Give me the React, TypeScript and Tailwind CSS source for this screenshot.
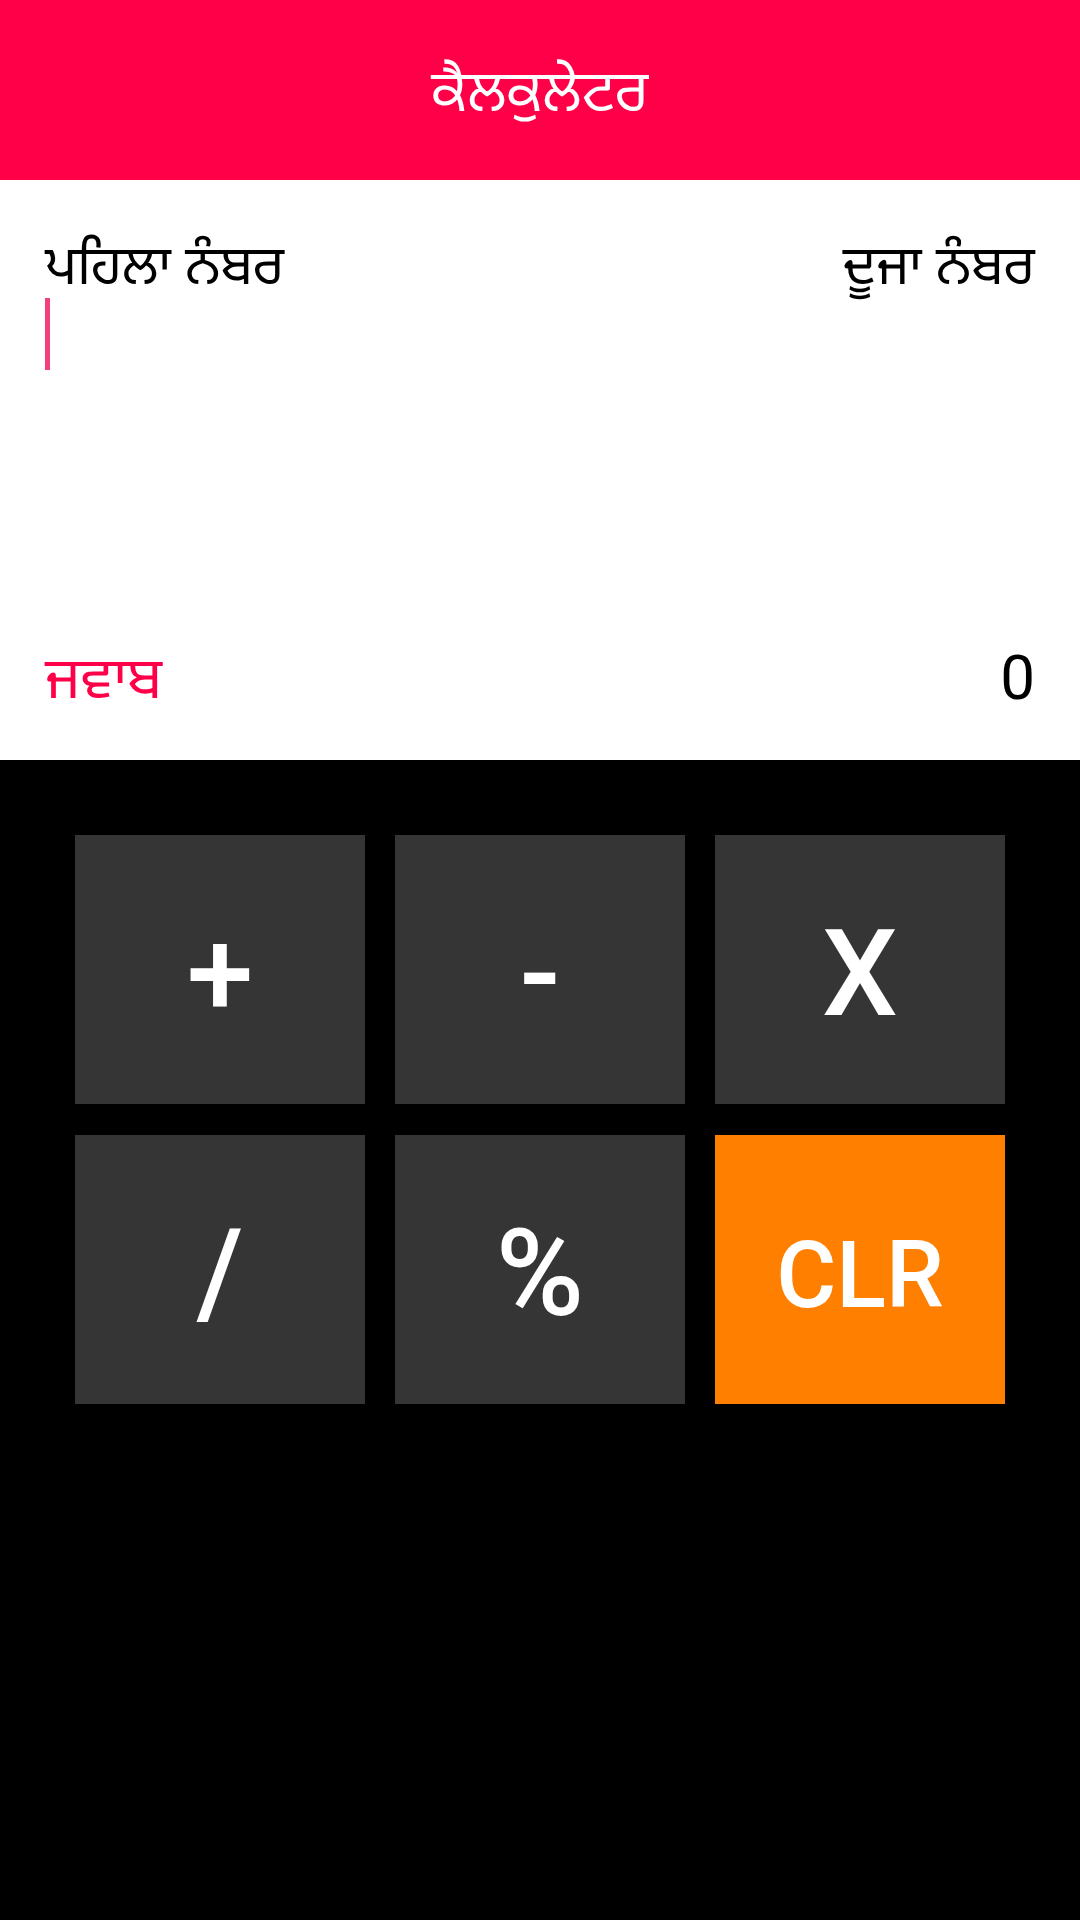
import React from 'react';

const guru = { fontFamily: '"Noto Sans Gurmukhi", "Noto Sans", "Lohit Gurmukhi", sans-serif' };
const roboto = { fontFamily: 'Roboto, "Noto Sans", sans-serif' };

const keys = [
  { label: '+', tone: 'dark' },
  { label: '-', tone: 'dark' },
  { label: 'X', tone: 'dark' },
  { label: '/', tone: 'dark' },
  { label: '%', tone: 'dark' },
  { label: 'CLR', tone: 'orange' },
];

const App = () => {
  return (
    <div className="w-[1080px] min-h-[1920px] flex flex-col bg-black">
      {/* Title bar */}
      <div className="h-[180px] bg-[#ff0048] flex items-center justify-center">
        <h1 className="text-[58px] text-white leading-none pt-[14px]" style={guru}>
          ਕੈਲਕੁਲੇਟਰ
        </h1>
      </div>

      {/* Inputs + answer */}
      <div className="h-[580px] bg-white px-[45px] flex flex-col">
        <div className="flex justify-between pt-[61px] text-[54px] leading-[60px] text-black" style={guru}>
          <span>ਪਹਿਲਾ ਨੰਬਰ</span>
          <span>ਦੂਜਾ ਨੰਬਰ</span>
        </div>
        <div className="-mt-[3px] w-[5px] h-[72px] bg-[#f43f78]" />
        <div className="mt-auto mb-[44px] flex items-end justify-between">
          <span className="text-[58px] leading-[64px] text-[#ff0048]" style={guru}>
            ਜਵਾਬ
          </span>
          <span className="mb-[3px] text-[62px] leading-[70px] text-black" style={roboto}>
            0
          </span>
        </div>
      </div>

      {/* Keypad */}
      <div className="flex-1 bg-black px-[75px] pt-[75px]">
        <div className="grid grid-cols-3 gap-x-[30px] gap-y-[31px]">
          {keys.map((k) => (
            <div
              key={k.label}
              className={
                k.tone === 'orange'
                  ? 'h-[269px] pt-[12px] bg-[#ff8000] flex items-center justify-center text-white text-[92px] font-medium leading-none'
                  : 'h-[269px] pt-[8px] bg-[#353535] flex items-center justify-center text-white text-[120px] font-medium leading-none'
              }
              style={roboto}
            >
              {k.label}
            </div>
          ))}
        </div>
      </div>
    </div>
  );
};

export default App;
